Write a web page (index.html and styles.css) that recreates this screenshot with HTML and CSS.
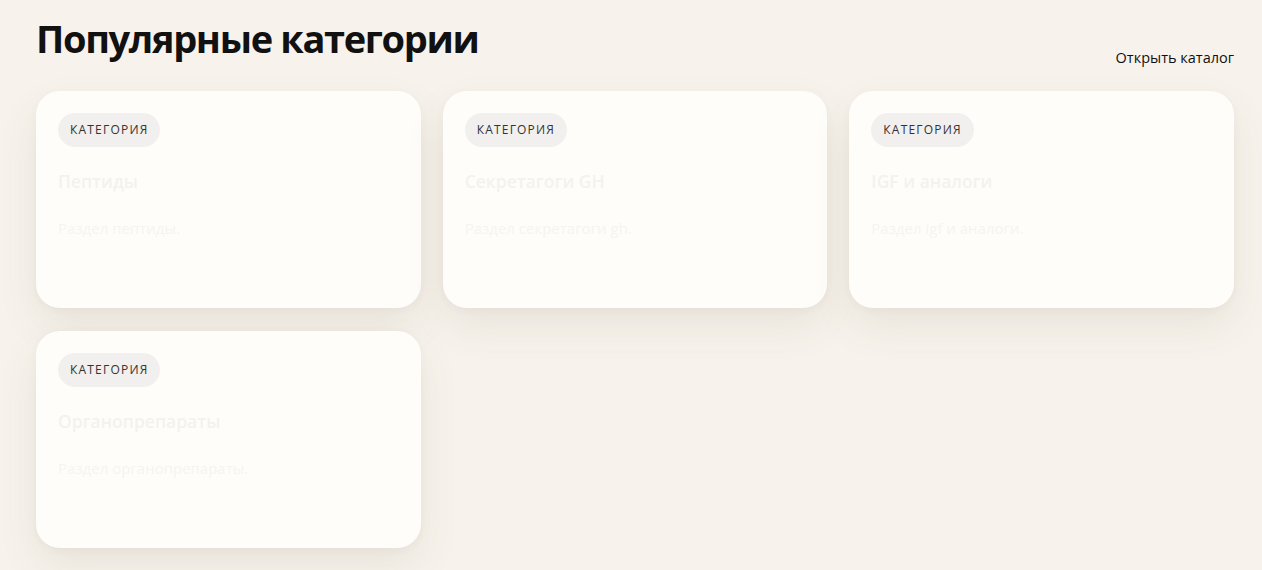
FILE: index.html
```html
<!DOCTYPE html>
<html lang="ru">
<head>
<meta charset="utf-8">
<title>Популярные категории</title>
<link rel="stylesheet" href="styles.css">
</head>
<body>
<section class="section">
  <header class="head">
    <h1 class="title">Популярные категории</h1>
    <a class="link" href="#">Открыть каталог</a>
  </header>
  <div class="grid">
    <article class="card">
      <span class="badge">Категория</span>
      <h2 class="card-title">Пептиды</h2>
      <p class="card-text">Раздел пептиды.</p>
    </article>
    <article class="card">
      <span class="badge">Категория</span>
      <h2 class="card-title">Секретагоги GH</h2>
      <p class="card-text">Раздел секретагоги gh.</p>
    </article>
    <article class="card">
      <span class="badge">Категория</span>
      <h2 class="card-title">IGF и аналоги</h2>
      <p class="card-text">Раздел igf и аналоги.</p>
    </article>
    <article class="card">
      <span class="badge">Категория</span>
      <h2 class="card-title">Органопрепараты</h2>
      <p class="card-text">Раздел органопрепараты.</p>
    </article>
  </div>
</section>
</body>
</html>
```

FILE: styles.css
```css
html, body {
  margin: 0;
  padding: 0;
}
body {
  background: #f7f3ec;
  font-family: "Open Sans", "Noto Sans", sans-serif;
  color: #111;
  height: 570px;
  overflow: hidden;
}
.section {
  padding: 14px 28px 0 36px;
}
.head {
  display: flex;
  justify-content: space-between;
  align-items: flex-end;
  margin-bottom: 29px;
}
.title {
  margin: 0;
  font-family: "Open Sans", "Noto Sans", sans-serif;
  font-size: 38px;
  line-height: 48px;
  font-weight: 700;
  letter-spacing: -1.35px;
  color: #111;
}
.link {
  font-size: 14.5px;
  line-height: 20px;
  color: #111;
  text-decoration: none;
  margin-bottom: -6px;
}
.grid {
  display: grid;
  grid-template-columns: repeat(3, 1fr);
  column-gap: 22px;
  row-gap: 23px;
}
.card {
  background: #fffdfa;
  border-radius: 24px;
  height: 217px;
  box-sizing: border-box;
  padding: 22px 22px;
  box-shadow: 0 18px 40px rgba(90, 70, 40, 0.09), 0 2px 8px rgba(90, 70, 40, 0.04);
}
.badge {
  display: inline-block;
  height: 34px;
  line-height: 34px;
  padding: 0 12px;
  border-radius: 17px;
  background: #f1f0ee;
  font-size: 12px;
  letter-spacing: 1.2px;
  text-transform: uppercase;
  color: #333;
}
.card-title {
  margin: 22px 0 0;
  font-size: 17.5px;
  line-height: 24px;
  font-weight: 600;
  color: #f4f2ee;
}
.card-text {
  margin: 24px 0 0;
  font-size: 15px;
  line-height: 22px;
  color: #f6f4f0;
}
```
